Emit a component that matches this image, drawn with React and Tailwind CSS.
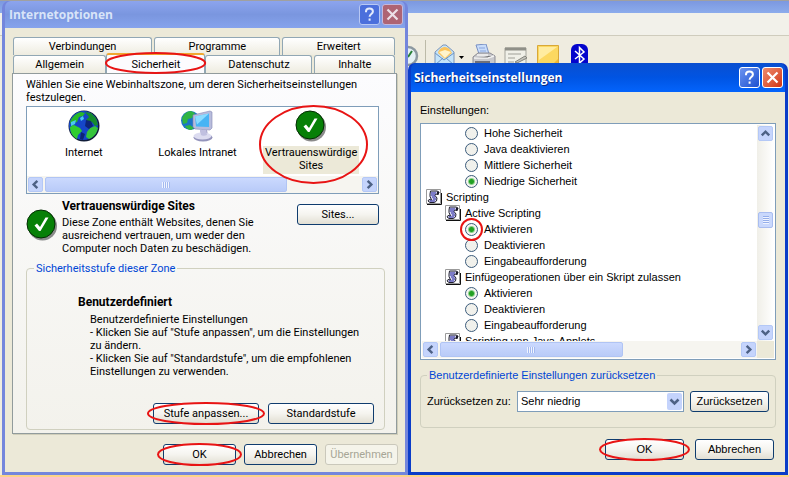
import { useState } from 'react';
import clsx from 'clsx';

const backTabs = [
  { label: 'Verbindungen', width: 'flex-[139]' },
  { label: 'Programme', width: 'flex-[126]' },
  { label: 'Erweitert', width: 'flex-[112]' },
];

const settings = [
  { type: 'radio', group: 'java', label: 'Hohe Sicherheit' },
  { type: 'radio', group: 'java', label: 'Java deaktivieren' },
  { type: 'radio', group: 'java', label: 'Mittlere Sicherheit' },
  { type: 'radio', group: 'java', label: 'Niedrige Sicherheit', checked: true },
  { type: 'root', label: 'Scripting' },
  { type: 'heading', label: 'Active Scripting' },
  { type: 'radio', group: 'active', label: 'Aktivieren', checked: true, marked: true },
  { type: 'radio', group: 'active', label: 'Deaktivieren' },
  { type: 'radio', group: 'active', label: 'Eingabeaufforderung' },
  { type: 'heading', label: 'Einfügeoperationen über ein Skript zulassen' },
  { type: 'radio', group: 'paste', label: 'Aktivieren', checked: true },
  { type: 'radio', group: 'paste', label: 'Deaktivieren' },
  { type: 'radio', group: 'paste', label: 'Eingabeaufforderung' },
  { type: 'heading', label: 'Scripting von Java-Applets' },
];

// Red ellipse drawn over the control it belongs to
function Marker({ className }) {
  return (
    <svg className={clsx('absolute pointer-events-none overflow-visible z-10', className)} viewBox="0 0 100 100" preserveAspectRatio="none">
      <ellipse cx="50" cy="50" rx="50" ry="50" fill="none" stroke="#e81414" strokeWidth="2" vectorEffect="non-scaling-stroke" />
    </svg>
  );
}

function XpButton({ children, className, disabled, marked }) {
  return (
    <div className={clsx('relative', className)}>
      <button
        disabled={disabled}
        className={clsx(
          'w-full h-[21px] rounded-[3px] border text-center whitespace-nowrap',
          disabled
            ? 'border-[#cac8bb] bg-[#f5f4ea] text-[#a7a696]'
            : 'border-[#0f3c6e] bg-linear-to-b from-white via-[#f5f4ef] to-[#e2dfd3]'
        )}
      >
        {children}
      </button>
      {marked && <Marker className="-left-[5px] top-0 w-[calc(100%+10px)] h-[21px]" />}
    </div>
  );
}

function TitleBar({ title, active }) {
  return (
    <header
      className={clsx(
        'flex items-center gap-[2px] rounded-t-[6px]',
        active
          ? 'h-[29px] pl-[3px] pr-[2px] bg-linear-to-b from-[#0a4fd0] via-[#0054e3] to-[#0464fc]'
          : 'h-[27px] pl-[4px] pr-[2px] bg-linear-to-b from-[#8ca4ee] via-[#7a96df] to-[#86a3ec]'
      )}
    >
      <h1
        className={clsx(
          "flex-1 font-['Open_Sans',sans-serif] font-bold text-[12px]",
          active ? 'text-white [text-shadow:1px_1px_#0a2a80]' : 'text-[#d8e4f8]'
        )}
      >
        {title}
      </h1>
      <button
        aria-label="Hilfe"
        className={clsx(
          'size-[21px] rounded-[3px] border grid place-items-center',
          active ? 'border-white bg-linear-to-br from-[#6c93f0] to-[#1c4fd0]' : 'border-[#b8c8f4] bg-[#4b6fdc]'
        )}
      >
        <svg viewBox="0 0 19 19" className="size-[19px]" fill="none" stroke={active ? '#fff' : '#e4ebfc'} strokeWidth="2">
          <path d="M6 7.2V6.4C6 4.6 7.4 3.6 9.4 3.6s3.5 1 3.5 2.8c0 2.500-3.300 2.600-3.300 5.400M9.600 13.500v2.200" />
        </svg>
      </button>
      <button
        aria-label="Schließen"
        className={clsx(
          'size-[21px] rounded-[3px] border grid place-items-center',
          active ? 'border-white bg-linear-to-br from-[#ee8a6c] to-[#d0300c]' : 'border-[#c4b8dc] bg-[#ae6474]'
        )}
      >
        <svg viewBox="0 0 19 19" className="size-[19px]" stroke={active ? '#fff' : '#ece0e8'} strokeWidth="2.2">
          <path d="M4.500 4.500l10 10M14.500 4.500l-10 10" />
        </svg>
      </button>
    </header>
  );
}

const chevrons = {
  left: 'M9 3L5 7l4 4',
  right: 'M5 3l4 4-4 4',
  up: 'M3 9l4-4 4 4',
  down: 'M3 5l4 4 4-4',
};

function ArrowButton({ dir, label }) {
  return (
    <button aria-label={label} className="size-[15px] shrink-0 rounded-[2px] bg-[#c5d4fc] border border-[#b4c8f6]">
      <svg viewBox="0 0 14 14" className="size-[13px]" fill="none" stroke="#4d6185" strokeWidth="2.6">
        <path d={chevrons[dir]} />
      </svg>
    </button>
  );
}

function HorizontalBar({ thumb, rest }) {
  return (
    <div className="flex h-[17px] gap-[2px] p-px bg-[#f6f5f0]">
      <ArrowButton dir="left" label="Nach links" />
      <div className={clsx('flex items-center justify-center rounded-[2px] border border-[#b0c4f4] bg-linear-to-b from-[#cbd9fe] to-[#b9cbf8]', thumb)}>
        <span className="w-[8px] h-[6px] bg-[repeating-linear-gradient(90deg,#f0f4ff_0_1px,#a4baf0_1px_2px)]" />
      </div>
      <div className={rest} />
      <ArrowButton dir="right" label="Nach rechts" />
    </div>
  );
}

function CheckIcon() {
  return (
    <svg viewBox="0 0 32 32" className="size-8 shrink-0">
      <circle cx="16.500" cy="17" r="14.500" fill="#8a8a8a" />
      <circle cx="15" cy="15" r="14" fill="#078007" stroke="#032c03" />
      <path d="M8.500 16.500l2.500-2 3 3.500 5.500-9.500h3L14.500 22h-1.500z" fill="#fff" />
    </svg>
  );
}

function GlobeIcon() {
  return (
    <svg viewBox="0 0 32 32" className="size-8">
      <circle cx="16" cy="16" r="15.500" fill="#101c38" />
      <circle cx="15.500" cy="15.500" r="14.500" fill="#1546c8" />
      <path d="M2 12c2-5 6-9 11-10l4 1-2 3-4 1-2 5-3 1-2 4z" fill="#28b828" />
      <path d="M2 17l4-2 6 3 2 3-4 4-1 4c-4-2-7-7-7-12z" fill="#30cc30" />
      <path d="M17 2l6 1 5 5 2 7-3 1-3-4-4 1-2-3 3-3z" fill="#148c2c" />
      <path d="M22 18l5-2 3 2c-1 5-4 9-9 11l-3-2 1-5z" fill="#35c43c" />
      <path d="M3 12l5-2-1 4-4 2zM12 8l3-2 1 3-3 2z" fill="#4ac8f0" />
      <path d="M18 10l5 1 2 5-4 3-4-3zM13 22l4 2-2 6-3-1z" fill="#0c2478" />
    </svg>
  );
}

function IntranetIcon() {
  return (
    <svg viewBox="0 0 32 32" className="size-8">
      <circle cx="9.500" cy="10.500" r="9.500" fill="#1c74c8" />
      <path d="M1 8c2-4 5-7 9-7l4 2-3 5-4 1-1 4-4 1zM4 16l5-1 4 3-3 2c-3 0-5-2-6-4z" fill="#30b444" />
      <path d="M12 5l17-4 2 1v16l-2 2-15-1-2-2z" fill="#b8bcdc" stroke="#8488b4" strokeWidth=".6" />
      <path d="M14 6.500l14-3v13.500l-13-.5z" fill="#48b4f4" />
      <path d="M14 6.500l14-3-12 11z" fill="#8cdcff" />
      <path d="M19 20h7l1 5h-7z" fill="#a8a8cc" />
      <ellipse cx="22" cy="27.500" rx="9.500" ry="4" fill="#9494bc" />
      <ellipse cx="21.500" cy="26" rx="9" ry="3.500" fill="#dcdcf0" />
      <path d="M19 20h6l1 5c-2 1-5 1-6 0z" fill="#c0c0e0" />
    </svg>
  );
}

function ScriptIcon() {
  return (
    <svg viewBox="0 0 16 16" className="size-4 shrink-0">
      <path d="M.500.500h14v14H.500z" fill="#fff" stroke="#9a9a9a" />
      <path d="M1 15.500h14.500V4" fill="none" stroke="#101010" />
      <path d="M4.500 2h7l1.500 1.500-1 2-2-.5-1 1.500 2 2.500-.5 3-2 1.500H4L2 12l1-1.500 2.500.5L4 7.500V5z" fill="#d8d8ec" stroke="#202030" />
      <path d="M5 4h5M5 6h4M6 8h3.500M7 10h3M4 12h5" stroke="#2020a4" strokeWidth="1.2" />
      <path d="M11 2.500h2v3h-2z" fill="#181828" />
    </svg>
  );
}

function MailToolbar() {
  return (
    <div className="flex items-start pl-[398px] pt-[8px] border-t border-[#cfccbd]">
      <svg viewBox="0 0 21 22" className="w-[21px] h-[22px]">
        <circle cx="10" cy="12" r="9" fill="#e4f0f4" stroke="#8c98a0" strokeWidth="2.500" />
        <path d="M10 13l4-6M10 13l-5-3" stroke="#288038" strokeWidth="2" />
      </svg>
      <span className="w-px h-[24px] ml-[6px] -mt-[4px] bg-[#bcbaa8]" />
      <svg viewBox="0 0 22 22" className="w-[22px] h-[22px] ml-[8px]">
        <path d="M1 8l8-7h3l8 7v14H1z" fill="#c4e4fa" stroke="#7c94b8" />
        <path d="M4 9c1-4 4-6 7-6s5 2 7 6l-7 6z" fill="#fcc45c" />
        <path d="M5 8l6-2 6 2-6 6z" fill="#fff4cc" />
        <path d="M1 9l9 7 10-7M1 21l8-7M20 21l-8-7" fill="none" stroke="#6c94c4" />
      </svg>
      <svg viewBox="0 0 5 3" className="w-[5px] h-[3px] ml-[3px] mt-[12px]"><path d="M0 0h5L2.500 3z" /></svg>
      <svg viewBox="0 0 24 22" className="w-[24px] h-[22px] ml-[8px]">
        <path d="M4 1l10-1 3 10H7z" fill="#c8dcfa" stroke="#7890c4" />
        <path d="M7 4h6M8 7h6" stroke="#88a4dc" />
        <path d="M1 13l5-4h12l5 3v10H1z" fill="#c8c8cc" stroke="#8c8c94" />
        <path d="M2 14h14l6-2M5 11h11" stroke="#f4f4f4" strokeWidth="1.500" />
        <path d="M3 18h15" stroke="#707078" strokeWidth="2" />
      </svg>
      <svg viewBox="0 0 24 22" className="w-[24px] h-[22px] ml-[8px]">
        <path d="M1 4h21v18H1z" fill="#f0f0e8" stroke="#a4a49c" />
        <path d="M1 5h21" stroke="#909088" strokeWidth="3" />
        <path d="M4 10h13M4 14h7M4 18h6" stroke="#a0a098" />
        <path d="M11 18l10-6 2 2-10 5z" fill="#c4c4bc" stroke="#84847c" />
      </svg>
      <svg viewBox="0 0 22 22" className="w-[22px] h-[22px] ml-[9px]">
        <path d="M.5 1.500h21v20H.5z" fill="#fcd860" stroke="#d8a838" />
        <path d="M2 3h18L2 16z" fill="#ffeca0" />
        <path d="M16 20l5-5v6z" fill="#f4b830" />
      </svg>
      <svg viewBox="0 0 17 24" className="w-[17px] h-[24px] ml-[12px]">
        <rect width="17" height="26" rx="6" fill="#0404cc" />
        <path d="M4 7l9 8-4.500 4V3.500L13 8l-9 7" fill="none" stroke="#fff" strokeWidth="1.500" />
      </svg>
    </div>
  );
}

function Tab({ label, className }) {
  return (
    <button role="tab" aria-selected={false} className={clsx('h-[18px] rounded-t-[3px] border border-b-0 border-[#91a7b4] bg-linear-to-b from-white to-[#eeece0]', className)}>
      {label}
    </button>
  );
}

function InternetOptions() {
  return (
    <section className="flex flex-col rounded-t-[7px] bg-[#7486dc] p-[3px] pt-0 font-[Roboto,'Liberation_Sans',sans-serif] text-[11px] leading-[13px]">
      <TitleBar title="Internetoptionen" />
      <div className="flex-1 bg-[#ece9d8] px-[7px] pt-[9px] pb-[7px]">
        <div role="tablist" className="pl-px pr-[3px]">
          <div className="flex gap-[2px]">
            {backTabs.map((tab) => (
              <Tab key={tab.label} label={tab.label} className={tab.width} />
            ))}
          </div>
          <div className="flex items-end">
            <Tab label="Allgemein" className="flex-[93]" />
            <div className="relative flex-[101] -mt-[2px] z-10">
              <button role="tab" aria-selected className="block w-full h-[20px] rounded-t-[3px] border-x border-t-2 border-x-[#91a7b4] border-t-[#f0a830] bg-[#fcfcfe]">
                Sicherheit
              </button>
              <Marker className="left-0 top-0 w-full h-[20px]" />
            </div>
            <Tab label="Datenschutz" className="flex-[107]" />
            <Tab label="Inhalte" className="flex-[80] ml-[2px]" />
          </div>
        </div>

        <div role="tabpanel" className="mr-px border border-[#919b9c] bg-linear-to-b from-[#fcfcfe] to-[#f3f2ec] pt-[4px] pb-[3px] pl-[13px] pr-[11px] shadow-[1px_1px_#d0ceba]">
          <p>Wählen Sie eine Webinhaltszone, um deren Sicherheitseinstellungen festzulegen.</p>

          <div className="mt-[2px] mr-[6px] border border-[#7f9db9] bg-white">
            <div className="relative grid grid-cols-3 h-[69px] pt-[3px] pr-[10px] items-start">
              <button className="flex flex-col items-center gap-[4px]">
                <GlobeIcon />
                <span>Internet</span>
              </button>
              <button className="flex flex-col items-center gap-[4px]">
                <IntranetIcon />
                <span>Lokales Intranet</span>
              </button>
              <button className="flex flex-col items-center gap-[4px]">
                <CheckIcon />
                <span className="bg-[#ece9d8] px-[2px] pb-[2px]">Vertrauenswürdige<br />Sites</span>
              </button>
              <Marker className="right-[11px] -top-px w-[107px] h-[77px]" />
            </div>
            <HorizontalBar thumb="flex-[242]" rest="flex-[71]" />
          </div>

          <div className="flex mt-[5px] mr-[6px]">
            <div className="pt-[10px] mr-[4px]"><CheckIcon /></div>
            <div className="flex-1">
              <h2 className="font-bold text-[12px] leading-[15px]">Vertrauenswürdige Sites</h2>
              <p className="mt-[2px]">Diese Zone enthält Websites, denen Sie ausreichend vertrauen, um weder den Computer noch Daten zu beschädigen.</p>
            </div>
            <XpButton className="w-[82px] mt-[5px] ml-[6px]">Sites...</XpButton>
          </div>

          <fieldset className="mt-[7px] rounded-[4px] border border-[#d0d0bf] px-[10px] pb-[5px]">
            <legend className="-ml-[3px] px-[2px] text-[#0046d5]">Sicherheitsstufe dieser Zone</legend>
            <div className="pl-[41px] pt-[20px]">
              <h2 className="font-bold text-[12px] leading-[15px]">Benutzerdefiniert</h2>
              <div className="pl-[12px] pt-[3px]">
                <p>Benutzerdefinierte Einstellungen</p>
                <p>- Klicken Sie auf "Stufe anpassen", um die Einstellungen<br />zu ändern.</p>
                <p>- Klicken Sie auf "Standardstufe", um die empfohlenen<br />Einstellungen zu verwenden.</p>
              </div>
            </div>
            <div className="flex justify-end gap-[9px] mt-[25px]">
              <XpButton className="w-[106px]" marked>Stufe anpassen...</XpButton>
              <XpButton className="w-[106px]">Standardstufe</XpButton>
            </div>
          </fieldset>
        </div>

        <div className="flex justify-end gap-[8px] mt-[10px]">
          <XpButton className="w-[73px]" marked>OK</XpButton>
          <XpButton className="w-[73px]">Abbrechen</XpButton>
          <XpButton className="w-[73px]" disabled>Übernehmen</XpButton>
        </div>
      </div>
    </section>
  );
}

function SettingRow({ item }) {
  if (item.type !== 'radio') {
    return (
      <div className={clsx('flex items-center h-4 gap-[4px]', item.type === 'root' ? 'pl-[4px]' : 'pl-[23px]')}>
        <ScriptIcon />
        {item.label}
      </div>
    );
  }
  return (
    <label className="flex items-center h-4 gap-[6px] pl-[43px]">
      <span className="relative size-[13px]">
        <input
          type="radio"
          name={item.group}
          defaultChecked={item.checked}
          className="block appearance-none size-[13px] rounded-full border border-[#3c5c7c] bg-[#f1f1ec] checked:bg-[radial-gradient(circle,#22a022_0_2px,#8cd08c_3px,#f4f4f0_4px)]"
        />
        {item.marked && <Marker className="-left-[4px] -top-[4px] size-[21px]" />}
      </span>
      {item.label}
    </label>
  );
}

function SecuritySettings() {
  const [level, setLevel] = useState('Sehr niedrig');

  return (
    <section className="flex flex-col mt-[62px] rounded-t-[7px] bg-[#0a3cc8] p-[3px] pt-0 font-['Liberation_Sans',Tahoma,sans-serif] text-[11px] leading-[13px]">
      <TitleBar title="Sicherheitseinstellungen" active />
      <div className="flex-1 bg-[#ece9d8] px-[9px] pt-[12px] pb-[12px]">
        <p>Einstellungen:</p>
        <div className="mt-[6px] border border-[#7f9db9] bg-white p-px">
          <div className="flex">
            <div className="flex-1 h-[216px] overflow-hidden">
              {settings.map((item, idx) => (
                <SettingRow key={idx} item={item} />
              ))}
            </div>
            <div className="flex flex-col w-[17px] p-px bg-linear-to-r from-[#f0efe8] to-white">
              <ArrowButton dir="up" label="Nach oben" />
              <div className="flex-[71]" />
              <div className="grid place-items-center h-[16px] rounded-[2px] border border-[#a9bdf0] bg-[#c9d8fc]">
                <span className="w-[6px] h-[8px] bg-[repeating-linear-gradient(0deg,#f0f4ff_0_1px,#94aeea_1px_2px)]" />
              </div>
              <div className="flex-[97]" />
              <ArrowButton dir="down" label="Nach unten" />
            </div>
          </div>
          <div className="flex">
            <div className="flex-1">
              <HorizontalBar thumb="flex-[185]" rest="flex-[117]" />
            </div>
            <div className="w-[17px] bg-[#ece9d8]" />
          </div>
        </div>

        <fieldset className="mt-[9px] rounded-[4px] border border-[#d0d0bf] px-[6px] pb-[15px]">
          <legend className="px-[2px] text-[#0046d5]">Benutzerdefinierte Einstellungen zurücksetzen</legend>
          <div className="flex items-center pt-[9px]">
            <label htmlFor="level" className="w-[90px]">Zurücksetzen zu:</label>
            <div className="relative flex-1">
              <select
                id="level"
                value={level}
                onChange={(e) => setLevel(e.target.value)}
                className="block w-full h-[21px] appearance-none border border-[#7f9db9] bg-white pl-[3px]"
              >
                <option>Hoch</option>
                <option>Mittel</option>
                <option>Niedrig</option>
                <option>Sehr niedrig</option>
              </select>
              <svg viewBox="0 0 15 17" className="absolute right-[2px] top-[2px] w-[15px] h-[17px] pointer-events-none">
                <rect width="15" height="17" rx="2" fill="#c4d3fc" />
                <path d="M3.500 6.500l4 4 4-4" fill="none" stroke="#4d6185" strokeWidth="2.500" />
              </svg>
            </div>
            <XpButton className="w-[79px] ml-[6px]">Zurücksetzen</XpButton>
          </div>
        </fieldset>

        <div className="flex justify-end gap-[11px] mt-[11px] pr-[2px]">
          <XpButton className="w-[79px]" marked>OK</XpButton>
          <XpButton className="w-[79px]">Abbrechen</XpButton>
        </div>
      </div>
    </section>
  );
}

export default function App() {
  return (
    <div className="relative min-h-screen overflow-hidden bg-[#efece0] text-black">
      <div className="absolute inset-0 flex flex-col">
        <div className="h-[13px] border-t border-[#a0a0a0] bg-linear-to-b from-[#7c98e0] to-[#8cacec]" />
        <div className="h-[22px] bg-[#f2f1ea]" />
        <MailToolbar />
        <div className="mt-auto h-[2px] bg-[#fcd488]" />
      </div>
      <main className="relative grid min-h-screen grid-cols-[406fr_380fr] pt-px pl-[2px] pr-px pb-[2px]">
        <InternetOptions />
        <SecuritySettings />
      </main>
    </div>
  );
}
